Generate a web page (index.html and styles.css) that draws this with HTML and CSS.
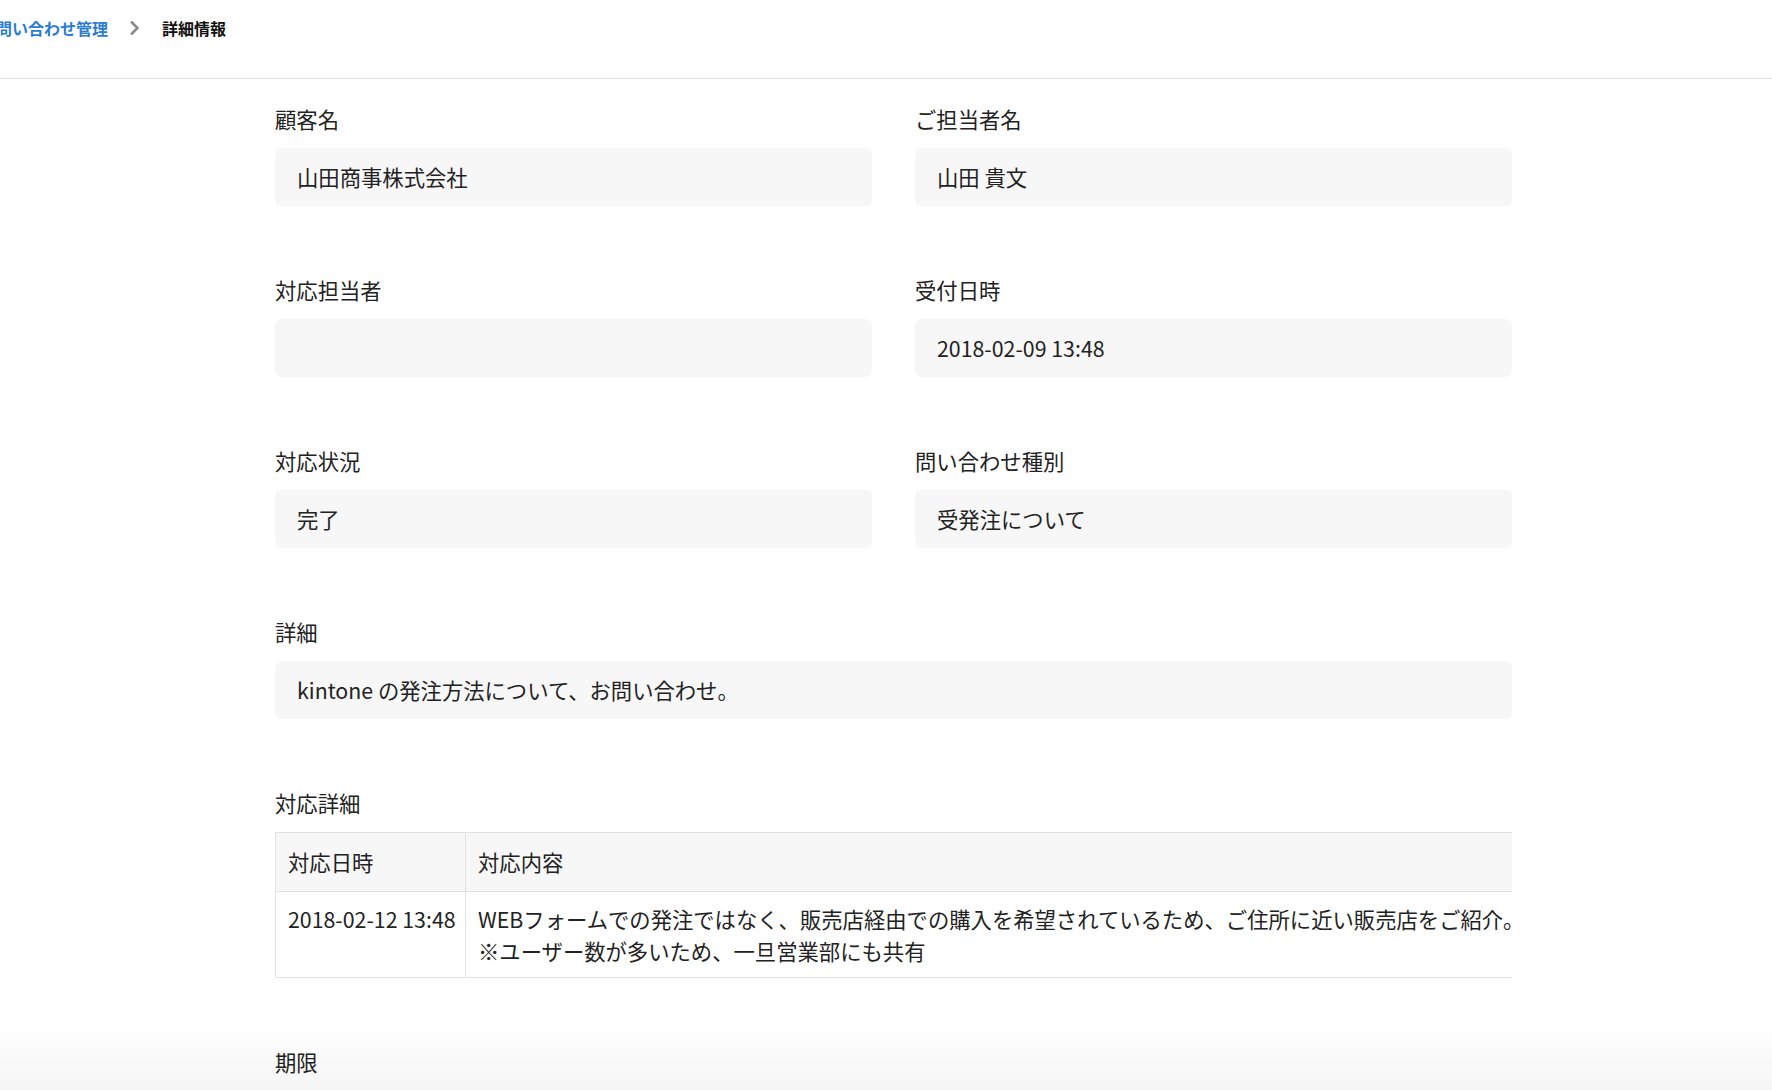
FILE: index.html
```html
<!DOCTYPE html>
<html lang="ja">

<head>
  <meta charset="UTF-8">
  <title>詳細情報</title>
  <link rel="stylesheet" href="styles.css">
</head>

<body>
  <div class="crumb">
    <a href="javascript:;" class="crumb-link">問い合わせ管理</a>
    <svg class="crumb-sep" width="10" height="16" viewBox="0 0 10 16">
      <path d="M2 1.5 L8.5 8 L2 14.5" fill="none" stroke="#8a8a8a" stroke-width="2.6" />
    </svg>
    <span class="crumb-cur">詳細情報</span>
  </div>

  <div class="detail">
    <div class="grid">
      <div class="field">
        <div class="label">顧客名</div>
        <div class="value">山田商事株式会社</div>
      </div>
      <div class="field">
        <div class="label">ご担当者名</div>
        <div class="value">山田 貴文</div>
      </div>
      <div class="field">
        <div class="label">対応担当者</div>
        <div class="value"></div>
      </div>
      <div class="field">
        <div class="label">受付日時</div>
        <div class="value">2018-02-09 13:48</div>
      </div>
      <div class="field">
        <div class="label">対応状況</div>
        <div class="value">完了</div>
      </div>
      <div class="field">
        <div class="label">問い合わせ種別</div>
        <div class="value">受発注について</div>
      </div>
      <div class="field wide">
        <div class="label">詳細</div>
        <div class="value">kintone の発注方法について、お問い合わせ。</div>
      </div>
      <div class="field wide">
        <div class="label">対応詳細</div>
        <table class="tbl">
          <thead>
            <tr>
              <th class="col-date">対応日時</th>
              <th>対応内容</th>
            </tr>
          </thead>
          <tbody>
            <tr>
              <td>2018-02-12 13:48</td>
              <td>WEBフォームでの発注ではなく、販売店経由での購入を希望されているため、ご住所に近い販売店をご紹介。<br>※ユーザー数が多いため、一旦営業部にも共有</td>
            </tr>
          </tbody>
        </table>
      </div>
      <div class="field wide">
        <div class="label">期限</div>
        <div class="value"></div>
      </div>
    </div>
  </div>

  <div class="bottom-fade"></div>
</body>

</html>
```
FILE: styles.css
```css
* {
  margin: 0;
  padding: 0;
  box-sizing: border-box;
}

html,
body {
  width: 100%;
  height: 100%;
  overflow: hidden;
}

body {
  font-family: "Noto Sans CJK JP", "Noto Sans", sans-serif;
  color: #333;
  background: #fff;
}

.crumb {
  display: flex;
  align-items: center;
  height: 79px;
  padding: 0 0 22px 0;
  margin-left: -4px;
  border-bottom: 1px solid #e2e2e2;
  font-size: 16px;
  font-weight: bold;
  line-height: 24px;
}

.crumb-link {
  color: #2b7cd3;
  text-decoration: none;
}

.crumb-sep {
  margin: 0 23px 0 21px;
}

.crumb-cur {
  color: #111;
}

.detail {
  margin-left: 275px;
  width: 1237px;
  padding-top: 24px;
}

.grid {
  display: grid;
  grid-template-columns: 1fr 1fr;
  column-gap: 43px;
  row-gap: 68px;
}

.field.wide {
  grid-column: 1 / -1;
}

.label {
  font-size: 21.33px;
  line-height: 32px;
  margin-bottom: 13px;
  color: #222;
}

.value {
  height: 58px;
  line-height: 58px;
  padding: 0 22px;
  font-size: 21.33px;
  background: #f7f7f7;
  border-radius: 6px;
  color: #222;
}

.tbl {
  width: 100%;
  table-layout: fixed;
  border-collapse: collapse;
  font-size: 21.33px;
  line-height: 32px;
  white-space: nowrap;
  color: #222;
}

.tbl th,
.tbl td {
  border: 1px solid #e2e2e2;
  text-align: left;
  vertical-align: top;
  font-weight: normal;
  padding: 11px 10px 10px 12px;
}

.tbl th {
  background: #f7f7f7;
  padding-top: 13px;
  padding-bottom: 13px;
}

.tbl th:last-child,
.tbl td:last-child {
  border-right: none;
}

.tbl .col-date {
  width: 190px;
}

.bottom-fade {
  position: fixed;
  left: 0;
  right: 0;
  bottom: 0;
  height: 64px;
  background: linear-gradient(rgba(0, 0, 0, 0), rgba(0, 0, 0, 0.04));
  pointer-events: none;
}
```
